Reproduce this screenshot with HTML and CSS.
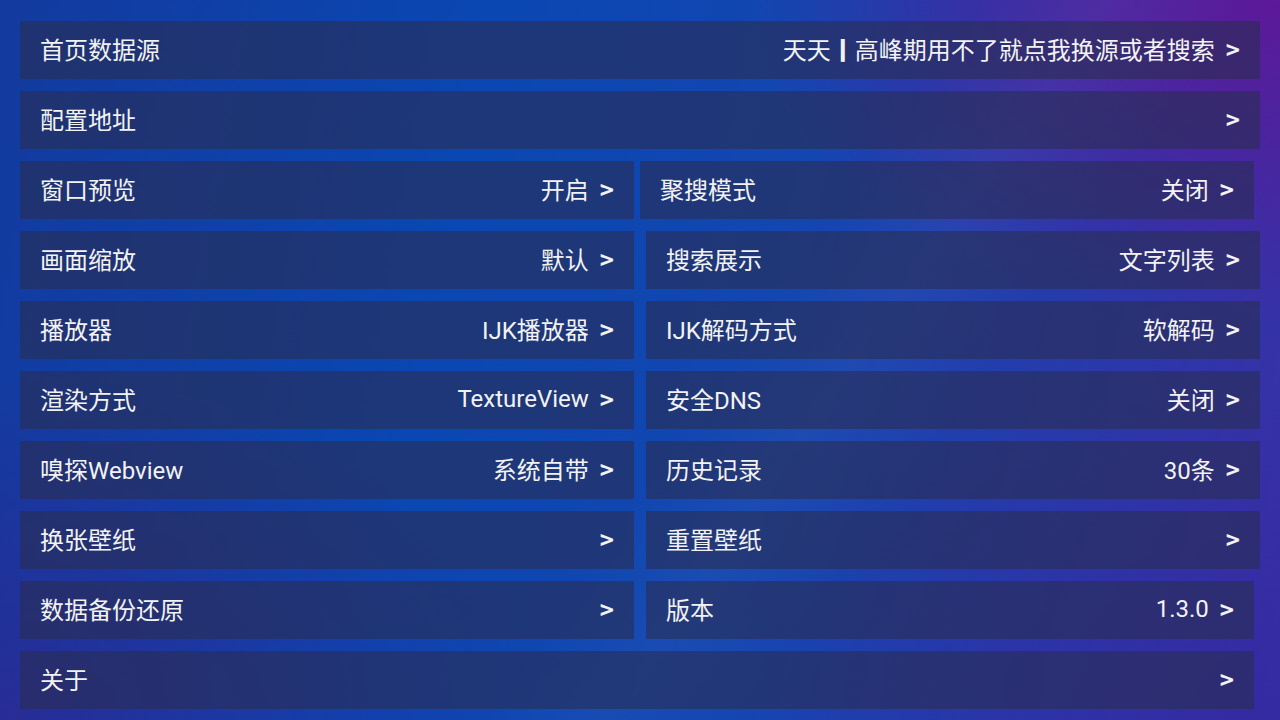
FILE: index.html
```html
<!DOCTYPE html>
<html lang="zh-CN">
<head>
    <meta charset="UTF-8">
    <meta name="viewport" content="width=device-width, initial-scale=1.0">
    <title>设置</title>
    <link rel="stylesheet" href="styles.css">
</head>
<body>
    <div class="settings">
        <div class="row">
            <div class="cell">
                <span class="label">首页数据源</span>
                <span class="value">天天<b class="sep">丨</b>高峰期用不了就点我换源或者搜索</span>
                <span class="arrow">&gt;</span>
            </div>
        </div>
        <div class="row">
            <div class="cell">
                <span class="label">配置地址</span>
                <span class="arrow">&gt;</span>
            </div>
        </div>
        <div class="row pair">
            <div class="cell">
                <span class="label">窗口预览</span>
                <span class="value">开启</span>
                <span class="arrow">&gt;</span>
            </div>
            <div class="cell shifted">
                <span class="label">聚搜模式</span>
                <span class="value">关闭</span>
                <span class="arrow">&gt;</span>
            </div>
        </div>
        <div class="row pair">
            <div class="cell">
                <span class="label">画面缩放</span>
                <span class="value">默认</span>
                <span class="arrow">&gt;</span>
            </div>
            <div class="cell">
                <span class="label">搜索展示</span>
                <span class="value">文字列表</span>
                <span class="arrow">&gt;</span>
            </div>
        </div>
        <div class="row pair">
            <div class="cell">
                <span class="label">播放器</span>
                <span class="value">IJK播放器</span>
                <span class="arrow">&gt;</span>
            </div>
            <div class="cell">
                <span class="label">IJK解码方式</span>
                <span class="value">软解码</span>
                <span class="arrow">&gt;</span>
            </div>
        </div>
        <div class="row pair">
            <div class="cell">
                <span class="label">渲染方式</span>
                <span class="value">TextureView</span>
                <span class="arrow">&gt;</span>
            </div>
            <div class="cell">
                <span class="label">安全DNS</span>
                <span class="value">关闭</span>
                <span class="arrow">&gt;</span>
            </div>
        </div>
        <div class="row pair">
            <div class="cell">
                <span class="label">嗅探Webview</span>
                <span class="value">系统自带</span>
                <span class="arrow">&gt;</span>
            </div>
            <div class="cell">
                <span class="label">历史记录</span>
                <span class="value">30条</span>
                <span class="arrow">&gt;</span>
            </div>
        </div>
        <div class="row pair">
            <div class="cell">
                <span class="label">换张壁纸</span>
                <span class="arrow">&gt;</span>
            </div>
            <div class="cell">
                <span class="label">重置壁纸</span>
                <span class="arrow">&gt;</span>
            </div>
        </div>
        <div class="row pair">
            <div class="cell">
                <span class="label">数据备份还原</span>
                <span class="arrow">&gt;</span>
            </div>
            <div class="cell short">
                <span class="label">版本</span>
                <span class="value">1.3.0</span>
                <span class="arrow">&gt;</span>
            </div>
        </div>
        <div class="row">
            <div class="cell short">
                <span class="label">关于</span>
                <span class="arrow">&gt;</span>
            </div>
        </div>
    </div>
</body>
</html>
```

FILE: styles.css
```css
body {
    width: 1280px;
    height: 720px;
    margin: 0;
    overflow: hidden;
    font-family: Roboto, "Noto Sans CJK SC", sans-serif;
    color: #f2f2f2;
    background:
        linear-gradient(125deg, transparent 55%, rgba(255, 255, 255, 0.03) 62%, transparent 70%),
        radial-gradient(ellipse 60% 70% at 0% 100%, rgba(60, 30, 140, 0.55), transparent 70%),
        radial-gradient(ellipse 55% 60% at 100% 0%, rgba(100, 20, 150, 0.85), transparent 75%),
        radial-gradient(ellipse 50% 60% at 100% 100%, rgba(50, 40, 160, 0.7), transparent 80%),
        linear-gradient(100deg, #133a9e 0%, #0a47b2 35%, #1446b0 60%, #3a2fa6 100%);
}
.settings {
    display: flex;
    flex-direction: column;
    gap: 12px;
    padding: 21px 20px 0 20px;
}
.row {
    display: flex;
    gap: 12px;
}
.cell {
    flex: 1;
    box-sizing: border-box;
    height: 58px;
    display: flex;
    align-items: center;
    padding: 0 20px 3px 20px;
    background-color: rgba(42, 45, 82, 0.6);
    font-size: 24px;
    white-space: nowrap;
}
.pair .cell {
    flex: 0 0 614px;
}
.pair .cell.short {
    flex-basis: 608px;
}
.cell.shifted {
    margin-left: -6px;
}
.cell.short {
    margin-right: 6px;
}
.label {
    flex: 1;
}
.value {
    margin-right: 11px;
}
.sep {
    font-weight: 900;
    font-family: "Noto Sans CJK SC", sans-serif;
}
.arrow {
    font-weight: 700;
    font-family: "Noto Sans CJK SC", sans-serif;
}
```
